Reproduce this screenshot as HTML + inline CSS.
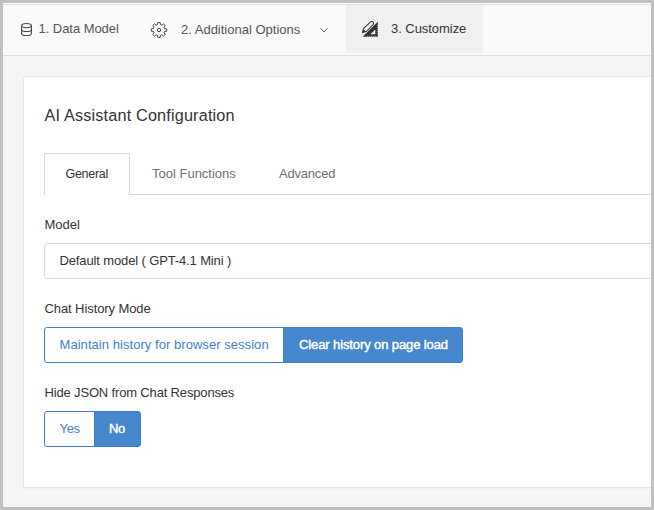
<!DOCTYPE html>
<html><head><meta charset="utf-8">
<style>
html,body{margin:0;padding:0;}
body{width:654px;height:510px;overflow:hidden;background:#c0c0c0;font-family:"Liberation Sans",sans-serif;font-size:13px;position:relative;}
#app{position:absolute;left:3px;top:3px;width:648px;height:504px;background:#f5f5f5;overflow:hidden;}
#nav{position:absolute;left:0;top:0;width:648px;height:51px;background:#fafafa;border-top:1px solid #fff;border-bottom:1px solid #dedede;box-shadow:inset 0 1px 0 #dedede;}
#act{position:absolute;left:343px;top:2px;width:137px;height:48px;background:#f0f0f0;}
.t{position:absolute;white-space:nowrap;line-height:1;font-size:13px;}
.nt{color:#555;}
#card{position:absolute;left:23px;top:76px;width:700px;height:410px;background:#fff;border:1px solid #e6e6e6;border-radius:3px;box-shadow:0 1px 2px rgba(0,0,0,.03);}
#tabline{position:absolute;left:130px;top:194px;width:620px;height:1px;background:#d8d8d8;}
#tab1{position:absolute;left:44px;top:153px;width:84px;height:41px;border:1px solid #d8d8d8;border-bottom:0;background:#fff;}
#sel{position:absolute;left:44px;top:243px;width:640px;height:34px;border:1px solid #dadada;border-radius:3px;background:#fff;}
.bo{position:absolute;box-sizing:border-box;border:1px solid #3d7cc9;background:#fff;border-radius:3px 0 0 3px;height:36px;}
.bf{position:absolute;box-sizing:border-box;background:#4687cd;border:1px solid #3d7cc9;border-radius:0 3px 3px 0;height:36px;}
.bl{color:#4180cd;}
.w{color:#fff;-webkit-text-stroke:0.45px #fff;}
.lab{color:#333;}
.gr{color:#6f6f6f;}
svg{position:absolute;overflow:visible;}
#frame{position:absolute;left:0;top:0;width:654px;height:510px;box-sizing:border-box;border:3px solid #c0c0c0;z-index:10;}
</style></head><body>
<div id="app"></div>
<div id="nav" style="left:3px;top:3px;"></div>
<div id="act"  style="left:346px;top:5px;"></div>

<!-- icons -->
<svg id="idb" style="left:21px;top:23px" width="11" height="13" viewBox="0 0 11 13" fill="none" stroke="#444" stroke-width="1.1">
<ellipse cx="5.5" cy="2.6" rx="4.9" ry="2.1"/>
<path d="M0.6 2.6V10.4C0.6 11.6 2.8 12.5 5.5 12.5S10.4 11.6 10.4 10.4V2.6"/>
<path d="M0.6 6.4C0.6 7.6 2.8 8.5 5.5 8.5S10.4 7.6 10.4 6.4"/>
</svg>

<svg id="igear" style="left:151.4px;top:21.9px" width="16" height="16" viewBox="-8 -8 16 16" fill="none" stroke="#444" stroke-width="1" stroke-linejoin="round">
<path d="M-1.43 -5.40L-1.24 -7.40L1.24 -7.40L1.43 -5.40L2.96 -4.80L4.57 -6.08L6.32 -4.39L4.99 -2.85L5.62 -1.38L7.70 -1.19L7.70 1.19L5.62 1.38L4.99 2.85L6.32 4.39L4.57 6.08L2.96 4.80L1.43 5.40L1.24 7.40L-1.24 7.40L-1.43 5.40L-2.96 4.80L-4.57 6.08L-6.32 4.39L-4.99 2.85L-5.62 1.38L-7.70 1.19L-7.70 -1.19L-5.62 -1.38L-4.99 -2.85L-6.32 -4.39L-4.57 -6.08L-2.96 -4.80Z"/>
<circle cx="0" cy="0" r="1.7"/>
</svg>

<svg id="ichev" style="left:320.2px;top:27.8px" width="8" height="5" viewBox="0 0 8 5" fill="none" stroke="#666" stroke-width="1"><path d="M0.4 0.4L4 3.9L7.6 0.4"/></svg>

<svg id="icust" style="left:362px;top:21px" width="17" height="16" viewBox="0 0 17 16">
<path d="M0.6 15.8L15.8 0.7V15.8Z M8.4 13.3H13.3V8.5Z" fill="#333" fill-rule="evenodd"/>
<path d="M14.9 4.5h1M14.9 6.5h1M14.9 8.5h1M14.9 10.5h1M14.9 12.5h1M5.5 14.9v1M7.5 14.9v1M9.5 14.9v1M11.5 14.9v1M13.5 14.9v1" stroke="#efefef" stroke-width="0.7" opacity="0.75"/>
<path d="M0.5 11.6L1.5 7.6L8.5 0.9Q9.9 -0.1 11.1 1.1Q12.2 2.4 11.2 3.7L4.3 10.5Z" fill="none" stroke="#333" stroke-width="1.05" stroke-linejoin="round"/>
<path d="M0.5 11.6L1.4 8.2L3.8 10.6Z" fill="#333"/>
</svg>

<span class="t nt" id="n1" style="letter-spacing:-0.05px;left:38.5px;top:22px">1. Data Model</span>
<span class="t nt" id="n2" style="left:181px;top:22.8px">2. Additional Options</span>
<span class="t nt" id="n3" style="letter-spacing:-0.05px;left:391px;top:22px;color:#333">3. Customize</span>

<div id="card"></div>
<span class="t" id="title" style="letter-spacing:0.16px;left:44.5px;top:107px;font-size:16.25px;color:#333">AI Assistant Configuration</span>

<div id="tabline"></div>
<div id="tab1"></div>
<span class="t" id="tb1" style="letter-spacing:-0.3px;font-size:12.5px;left:65.5px;top:167.5px;color:#333">General</span>
<span class="t gr" id="tb2" style="left:152px;top:167px">Tool Functions</span>
<span class="t gr" id="tb3" style="letter-spacing:-0.2px;left:279px;top:167px">Advanced</span>

<span class="t lab" id="l1" style="left:44.5px;top:218px">Model</span>
<div id="sel"></div>
<span class="t" id="s1" style="letter-spacing:-0.13px;left:59.5px;top:254px;color:#333">Default model ( GPT-4.1 Mini )</span>

<span class="t lab" id="l2" style="letter-spacing:-0.09px;left:44.5px;top:302px">Chat History Mode</span>
<div class="bo" id="b1" style="left:44px;top:327px;width:240px"></div>
<div class="bf" id="b2" style="left:283px;top:327px;width:180px"></div>
<span class="t bl" id="bt1" style="letter-spacing:0.05px;left:59.5px;top:338px">Maintain history for browser session</span>
<span class="t w" id="bt2" style="letter-spacing:-0.11px;left:299px;top:338px">Clear history on page load</span>

<span class="t lab" id="l3" style="letter-spacing:-0.16px;left:44.5px;top:386px">Hide JSON from Chat Responses</span>
<div class="bo" id="b3" style="left:44px;top:411px;width:51px"></div>
<div class="bf" id="b4" style="left:94px;top:411px;width:47px"></div>
<span class="t bl" id="bt3" style="letter-spacing:-0.3px;left:59.5px;top:422px">Yes</span>
<span class="t w" id="bt4" style="letter-spacing:-0.3px;left:109px;top:422px">No</span>

<div id="frame"></div>
</body></html>
